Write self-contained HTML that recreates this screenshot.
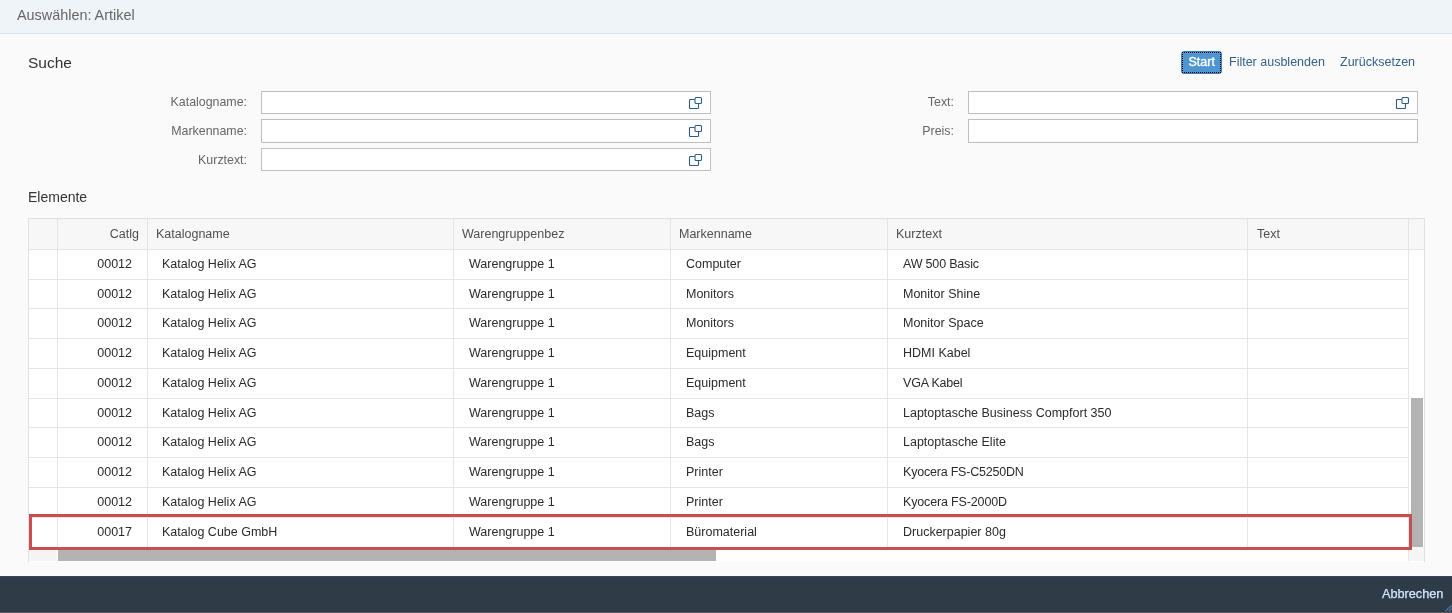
<!DOCTYPE html>
<html><head><meta charset="utf-8">
<style>
*{box-sizing:border-box;margin:0;padding:0}
html,body{width:1452px;height:613px;overflow:hidden;background:#fafafa;font-family:"Liberation Sans",sans-serif;position:relative}
.a{position:absolute;white-space:nowrap}
#hdr{left:0;top:0;width:1452px;height:34px;background:#eff4f9;border-bottom:1px solid #d3e1ee}
#hdr span{position:absolute;left:17px;top:7px;font-size:14.4px;color:#666}
.lbl{font-size:12.4px;color:#666;text-align:right}
.inp{background:#fff;border:1px solid #bfbfbf;height:23px}
#ftr{left:0;top:576px;width:1452px;height:37px;background:#2f3b47}
.hl{height:1px;background:#e5e5e5}
.vl{width:1px;background:#e5e5e5}
.th{font-size:12.5px;line-height:14px;color:#505050}
.td{font-size:12.5px;line-height:14px;color:#2b2b2b}
</style></head><body><div id="root" style="position:absolute;left:0;top:0;width:1452px;height:613px;will-change:transform">
<div id="hdr" class="a"><span>Auswählen: Artikel</span></div>
<div class="a" style="left:28px;top:54px;font-size:15.5px;color:#333">Suche</div>
<div class="a" style="left:1181px;top:51px;width:41px;height:23px;background:#4f95d0;border:1px solid #3b7fc0;border-radius:3px"></div>
<div class="a" style="left:1182px;top:52px;width:39px;height:21px;border:1px dotted #000"></div>
<div class="a" style="left:1188.5px;top:55px;font-size:12.5px;color:#fff;-webkit-text-stroke:0.35px #fff">Start</div>
<div class="a" style="left:1229px;top:55px;font-size:12.5px;color:#346187">Filter ausblenden</div>
<div class="a" style="left:1340px;top:55px;font-size:12.5px;color:#346187">Zurücksetzen</div>

<div class="a lbl" style="left:100px;width:147px;top:95px">Katalogname:</div>
<div class="a lbl" style="left:100px;width:147px;top:124px">Markenname:</div>
<div class="a lbl" style="left:100px;width:147px;top:153px">Kurztext:</div>
<div class="a inp" style="left:261px;top:91px;width:450px"></div>
<div class="a inp" style="left:261px;top:119px;width:450px;height:24px"></div>
<div class="a inp" style="left:261px;top:148px;width:450px"></div>
<svg class="a" style="left:686px;top:94px" width="18" height="18" viewBox="0 0 18 18"><path d="M8.6 5.5H4.3a0.8 0.8 0 0 0-0.8 0.8V13.7a0.8 0.8 0 0 0 0.8 0.8H11.7a0.8 0.8 0 0 0 0.8-0.8V9.6" fill="none" stroke="#2f5d88" stroke-width="1.1"/><rect x="9" y="3.5" width="6.5" height="6" rx="1" fill="none" stroke="#2f5d88" stroke-width="1.1"/></svg>
<svg class="a" style="left:686px;top:122px" width="18" height="18" viewBox="0 0 18 18"><path d="M8.6 5.5H4.3a0.8 0.8 0 0 0-0.8 0.8V13.7a0.8 0.8 0 0 0 0.8 0.8H11.7a0.8 0.8 0 0 0 0.8-0.8V9.6" fill="none" stroke="#2f5d88" stroke-width="1.1"/><rect x="9" y="3.5" width="6.5" height="6" rx="1" fill="none" stroke="#2f5d88" stroke-width="1.1"/></svg>
<svg class="a" style="left:686px;top:151px" width="18" height="18" viewBox="0 0 18 18"><path d="M8.6 5.5H4.3a0.8 0.8 0 0 0-0.8 0.8V13.7a0.8 0.8 0 0 0 0.8 0.8H11.7a0.8 0.8 0 0 0 0.8-0.8V9.6" fill="none" stroke="#2f5d88" stroke-width="1.1"/><rect x="9" y="3.5" width="6.5" height="6" rx="1" fill="none" stroke="#2f5d88" stroke-width="1.1"/></svg>
<div class="a lbl" style="left:800px;width:154px;top:95px">Text:</div>
<div class="a lbl" style="left:800px;width:154px;top:124px">Preis:</div>
<div class="a inp" style="left:968px;top:91px;width:450px"></div>
<div class="a inp" style="left:968px;top:119px;width:450px;height:24px"></div>
<svg class="a" style="left:1393px;top:94px" width="18" height="18" viewBox="0 0 18 18"><path d="M8.6 5.5H4.3a0.8 0.8 0 0 0-0.8 0.8V13.7a0.8 0.8 0 0 0 0.8 0.8H11.7a0.8 0.8 0 0 0 0.8-0.8V9.6" fill="none" stroke="#2f5d88" stroke-width="1.1"/><rect x="9" y="3.5" width="6.5" height="6" rx="1" fill="none" stroke="#2f5d88" stroke-width="1.1"/></svg>

<div class="a" style="left:28px;top:189px;font-size:14px;color:#333">Elemente</div>
<div class="a" style="left:28px;top:218px;width:1397px;height:344px;border:1px solid #e0e0e0;border-bottom:0;background:#fff"></div>
<div class="a" style="left:29px;top:219px;width:1395px;height:30px;background:#f7f7f7"></div>
<div class="a hl" style="left:29px;top:249px;width:1395px"></div>
<div class="a hl" style="left:29px;top:279px;width:1379px"></div>
<div class="a hl" style="left:29px;top:308px;width:1379px"></div>
<div class="a hl" style="left:29px;top:338px;width:1379px"></div>
<div class="a hl" style="left:29px;top:368px;width:1379px"></div>
<div class="a hl" style="left:29px;top:398px;width:1379px"></div>
<div class="a hl" style="left:29px;top:427px;width:1379px"></div>
<div class="a hl" style="left:29px;top:457px;width:1379px"></div>
<div class="a hl" style="left:29px;top:487px;width:1379px"></div>
<div class="a hl" style="left:29px;top:517px;width:1379px"></div>
<div class="a vl" style="left:57px;top:219px;height:331px"></div>
<div class="a vl" style="left:147px;top:219px;height:331px"></div>
<div class="a vl" style="left:453px;top:219px;height:331px"></div>
<div class="a vl" style="left:670px;top:219px;height:331px"></div>
<div class="a vl" style="left:887px;top:219px;height:331px"></div>
<div class="a vl" style="left:1247px;top:219px;height:331px"></div>
<div class="a vl" style="left:1408px;top:219px;height:342px"></div>
<div class="a th" style="left:60px;width:79px;text-align:right;top:227px">Catlg</div>
<div class="a th" style="left:156px;top:227px">Katalogname</div>
<div class="a th" style="left:462px;top:227px">Warengruppenbez</div>
<div class="a th" style="left:679px;top:227px">Markenname</div>
<div class="a th" style="left:896px;top:227px">Kurztext</div>
<div class="a th" style="left:1257px;top:227px">Text</div>
<div class="a td" style="left:60px;width:72px;text-align:right;top:257px">00012</div>
<div class="a td" style="left:162px;top:257px">Katalog Helix AG</div>
<div class="a td" style="left:469px;top:257px">Warengruppe 1</div>
<div class="a td" style="left:686px;top:257px">Computer</div>
<div class="a td" style="left:903px;top:257px;letter-spacing:-0.182px">AW 500 Basic</div>
<div class="a td" style="left:60px;width:72px;text-align:right;top:287px">00012</div>
<div class="a td" style="left:162px;top:287px">Katalog Helix AG</div>
<div class="a td" style="left:469px;top:287px">Warengruppe 1</div>
<div class="a td" style="left:686px;top:287px">Monitors</div>
<div class="a td" style="left:903px;top:287px;letter-spacing:0.000px">Monitor Shine</div>
<div class="a td" style="left:60px;width:72px;text-align:right;top:316px">00012</div>
<div class="a td" style="left:162px;top:316px">Katalog Helix AG</div>
<div class="a td" style="left:469px;top:316px">Warengruppe 1</div>
<div class="a td" style="left:686px;top:316px">Monitors</div>
<div class="a td" style="left:903px;top:316px;letter-spacing:0.000px">Monitor Space</div>
<div class="a td" style="left:60px;width:72px;text-align:right;top:346px">00012</div>
<div class="a td" style="left:162px;top:346px">Katalog Helix AG</div>
<div class="a td" style="left:469px;top:346px">Warengruppe 1</div>
<div class="a td" style="left:686px;top:346px">Equipment</div>
<div class="a td" style="left:903px;top:346px;letter-spacing:0.000px">HDMI Kabel</div>
<div class="a td" style="left:60px;width:72px;text-align:right;top:376px">00012</div>
<div class="a td" style="left:162px;top:376px">Katalog Helix AG</div>
<div class="a td" style="left:469px;top:376px">Warengruppe 1</div>
<div class="a td" style="left:686px;top:376px">Equipment</div>
<div class="a td" style="left:903px;top:376px;letter-spacing:-0.188px">VGA Kabel</div>
<div class="a td" style="left:60px;width:72px;text-align:right;top:406px">00012</div>
<div class="a td" style="left:162px;top:406px">Katalog Helix AG</div>
<div class="a td" style="left:469px;top:406px">Warengruppe 1</div>
<div class="a td" style="left:686px;top:406px">Bags</div>
<div class="a td" style="left:903px;top:406px;letter-spacing:0.000px">Laptoptasche Business Compfort 350</div>
<div class="a td" style="left:60px;width:72px;text-align:right;top:435px">00012</div>
<div class="a td" style="left:162px;top:435px">Katalog Helix AG</div>
<div class="a td" style="left:469px;top:435px">Warengruppe 1</div>
<div class="a td" style="left:686px;top:435px">Bags</div>
<div class="a td" style="left:903px;top:435px;letter-spacing:0.000px">Laptoptasche Elite</div>
<div class="a td" style="left:60px;width:72px;text-align:right;top:465px">00012</div>
<div class="a td" style="left:162px;top:465px">Katalog Helix AG</div>
<div class="a td" style="left:469px;top:465px">Warengruppe 1</div>
<div class="a td" style="left:686px;top:465px">Printer</div>
<div class="a td" style="left:903px;top:465px;letter-spacing:-0.206px">Kyocera FS-C5250DN</div>
<div class="a td" style="left:60px;width:72px;text-align:right;top:495px">00012</div>
<div class="a td" style="left:162px;top:495px">Katalog Helix AG</div>
<div class="a td" style="left:469px;top:495px">Warengruppe 1</div>
<div class="a td" style="left:686px;top:495px">Printer</div>
<div class="a td" style="left:903px;top:495px;letter-spacing:-0.153px">Kyocera FS-2000D</div>
<div class="a td" style="left:60px;width:72px;text-align:right;top:525px">00017</div>
<div class="a td" style="left:162px;top:525px">Katalog Cube GmbH</div>
<div class="a td" style="left:469px;top:525px">Warengruppe 1</div>
<div class="a td" style="left:686px;top:525px">Büromaterial</div>
<div class="a td" style="left:903px;top:525px;letter-spacing:0.000px">Druckerpapier 80g</div>
<div class="a" style="left:29px;top:550px;width:28px;height:11px;background:#f4f4f4"></div>
<div class="a" style="left:58px;top:550px;width:658px;height:11px;background:#b3b3b3"></div>
<div class="a" style="left:1411px;top:398px;width:12px;height:149px;background:#b3b3b3"></div>
<div class="a" style="left:1409px;top:547px;width:15px;height:14px;background:#f5f5f5"></div>
<div class="a" style="left:29px;top:514px;width:1383px;height:36px;border:3px solid #c84e51"></div>
<div id="ftr" class="a"><div class="a" style="left:0;top:0;width:1452px;height:1px;background:#37475a"></div><div class="a" style="left:0;top:36px;width:1452px;height:1px;background:#5a5a5a"></div><svg class="a" style="left:1444px;top:27px" width="8" height="9" viewBox="0 0 8 9"><path d="M1.5 8L8 2.2M5 8L8 5.3" stroke="#5b9bd5" stroke-width="1.2" stroke-dasharray="1.3 0.7" fill="none"/></svg><span class="a" style="left:1382px;top:11px;font-size:12.7px;color:#d1e8ff;-webkit-text-stroke:0.25px #d1e8ff">Abbrechen</span></div>
</div></body></html>
